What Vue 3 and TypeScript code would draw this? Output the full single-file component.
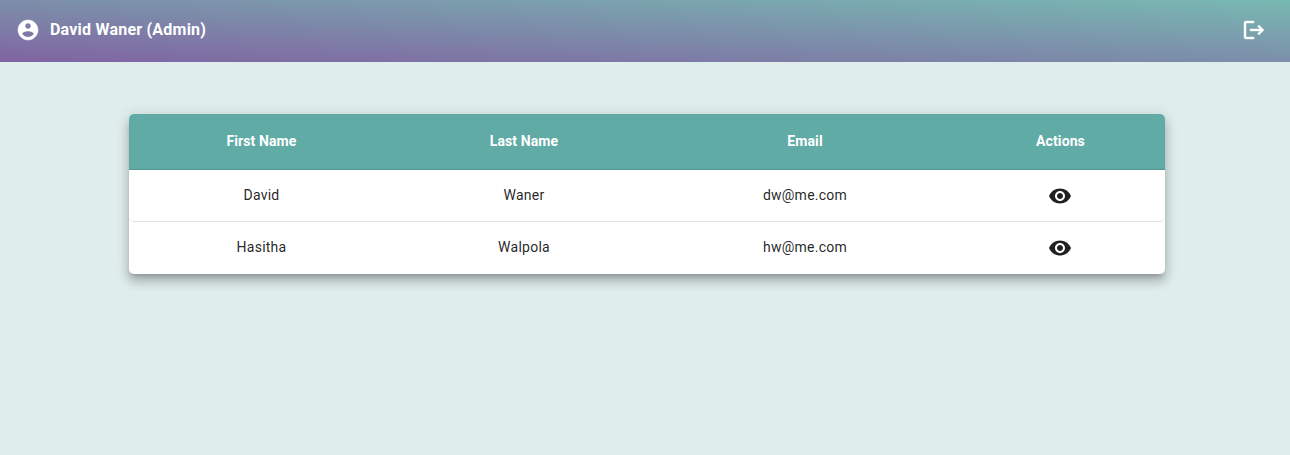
<script setup lang="ts">
interface User {
  firstName: string
  lastName: string
  email: string
}

const columns: string[] = ['First Name', 'Last Name', 'Email', 'Actions']

const users: User[] = [
  { firstName: 'David', lastName: 'Waner', email: 'dw@me.com' },
  { firstName: 'Hasitha', lastName: 'Walpola', email: 'hw@me.com' },
]
</script>

<template>
  <div class="page">
    <header class="toolbar">
      <div class="account">
        <svg class="account-icon" viewBox="0 0 24 24" aria-hidden="true">
          <path d="M12 2C6.48 2 2 6.48 2 12s4.48 10 10 10 10-4.48 10-10S17.52 2 12 2zm0 3c1.66 0 3 1.34 3 3s-1.34 3-3 3-3-1.34-3-3 1.34-3 3-3zm0 14.2c-2.5 0-4.71-1.28-6-3.22.03-1.99 4-3.08 6-3.08 1.99 0 5.97 1.09 6 3.08-1.29 1.94-3.5 3.22-6 3.22z" />
        </svg>
        <span class="account-name">David Waner (Admin)</span>
      </div>
      <button class="logout" type="button" aria-label="Log out">
        <svg viewBox="0 0 24 24" aria-hidden="true">
          <path d="M17 7l-1.41 1.41L18.17 11H8v2h10.17l-2.58 2.58L17 17l5-5zM4 5h8V3H4c-1.1 0-2 .9-2 2v14c0 1.1.9 2 2 2h8v-2H4V5z" />
        </svg>
      </button>
    </header>
    <main class="table">
      <div class="row head">
        <div v-for="column in columns" :key="column" class="cell">{{ column }}</div>
      </div>
      <div v-for="user in users" :key="user.email" class="row body-row">
        <div class="cell">{{ user.firstName }}</div>
        <div class="cell">{{ user.lastName }}</div>
        <div class="cell">{{ user.email }}</div>
        <div class="cell icon-cell">
          <svg class="eye" viewBox="0 0 24 24" aria-hidden="true">
            <path d="M12 4.5C7 4.5 2.73 7.61 1 12c1.73 4.39 6 7.5 11 7.5s9.27-3.11 11-7.5c-1.73-4.39-6-7.5-11-7.5zM12 17c-2.76 0-5-2.24-5-5s2.24-5 5-5 5 2.24 5 5-2.24 5-5 5zm0-8c-1.66 0-3 1.34-3 3s1.34 3 3 3 3-1.34 3-3-1.34-3-3-3z" />
          </svg>
        </div>
      </div>
    </main>
  </div>
</template>

<style>
body {
  margin: 0;
  background: #dfedec;
}
</style>

<style scoped>
.page {
  height: 455px;
  overflow: hidden;
  background: #dfedec;
  font-family: Roboto, "Liberation Sans", sans-serif;
}

.toolbar {
  box-sizing: border-box;
  height: 62px;
  padding: 0 24.5px 2px 16px;
  display: flex;
  align-items: center;
  justify-content: space-between;
  background: linear-gradient(to top right, #8064a2, #78b9b2);
  color: #fff;
}

.account {
  display: flex;
  align-items: center;
  gap: 10px;
}

.account-icon,
.logout svg,
.eye {
  display: block;
  width: 24px;
  height: 24px;
  fill: currentColor;
}

.account-icon {
  stroke: currentColor;
  stroke-width: 0.5;
}

.logout svg {
  stroke: currentColor;
  stroke-width: 0.4;
}

.account-name {
  font-size: 16px;
  line-height: 24px;
  font-weight: 700;
  letter-spacing: 0.22px;
}

.logout {
  padding: 0;
  border: 0;
  background: none;
  color: inherit;
}

.table {
  width: 1036px;
  margin: 52px 0 0 129px;
  border-radius: 5px;
  background: #fff;
  box-shadow:
    0 5px 5px -3px rgba(0, 0, 0, 0.2),
    0 8px 10px 1px rgba(0, 0, 0, 0.14),
    0 3px 14px 2px rgba(0, 0, 0, 0.12);
}

.row {
  box-sizing: border-box;
  display: grid;
  grid-template-columns: 265px 260px 302px 209px;
  align-items: center;
  border-bottom: 1px solid rgba(0, 0, 0, 0.12);
}

.head {
  height: 56px;
  border-radius: 5px 5px 0 0;
  background: #60aba6;
  color: #fff;
  font-size: 14px;
  font-weight: 700;
  letter-spacing: 0.1px;
}

.body-row {
  height: 52px;
  border-radius: 0 0 5px 5px;
  color: rgba(0, 0, 0, 0.87);
  font-size: 14px;
  letter-spacing: 0.25px;
}

.body-row:last-child {
  border-bottom-color: transparent;
}

.cell {
  display: flex;
  justify-content: center;
  padding-bottom: 2px;
  line-height: 22px;
}

.icon-cell {
  padding: 0 1px 0 0;
}
</style>
